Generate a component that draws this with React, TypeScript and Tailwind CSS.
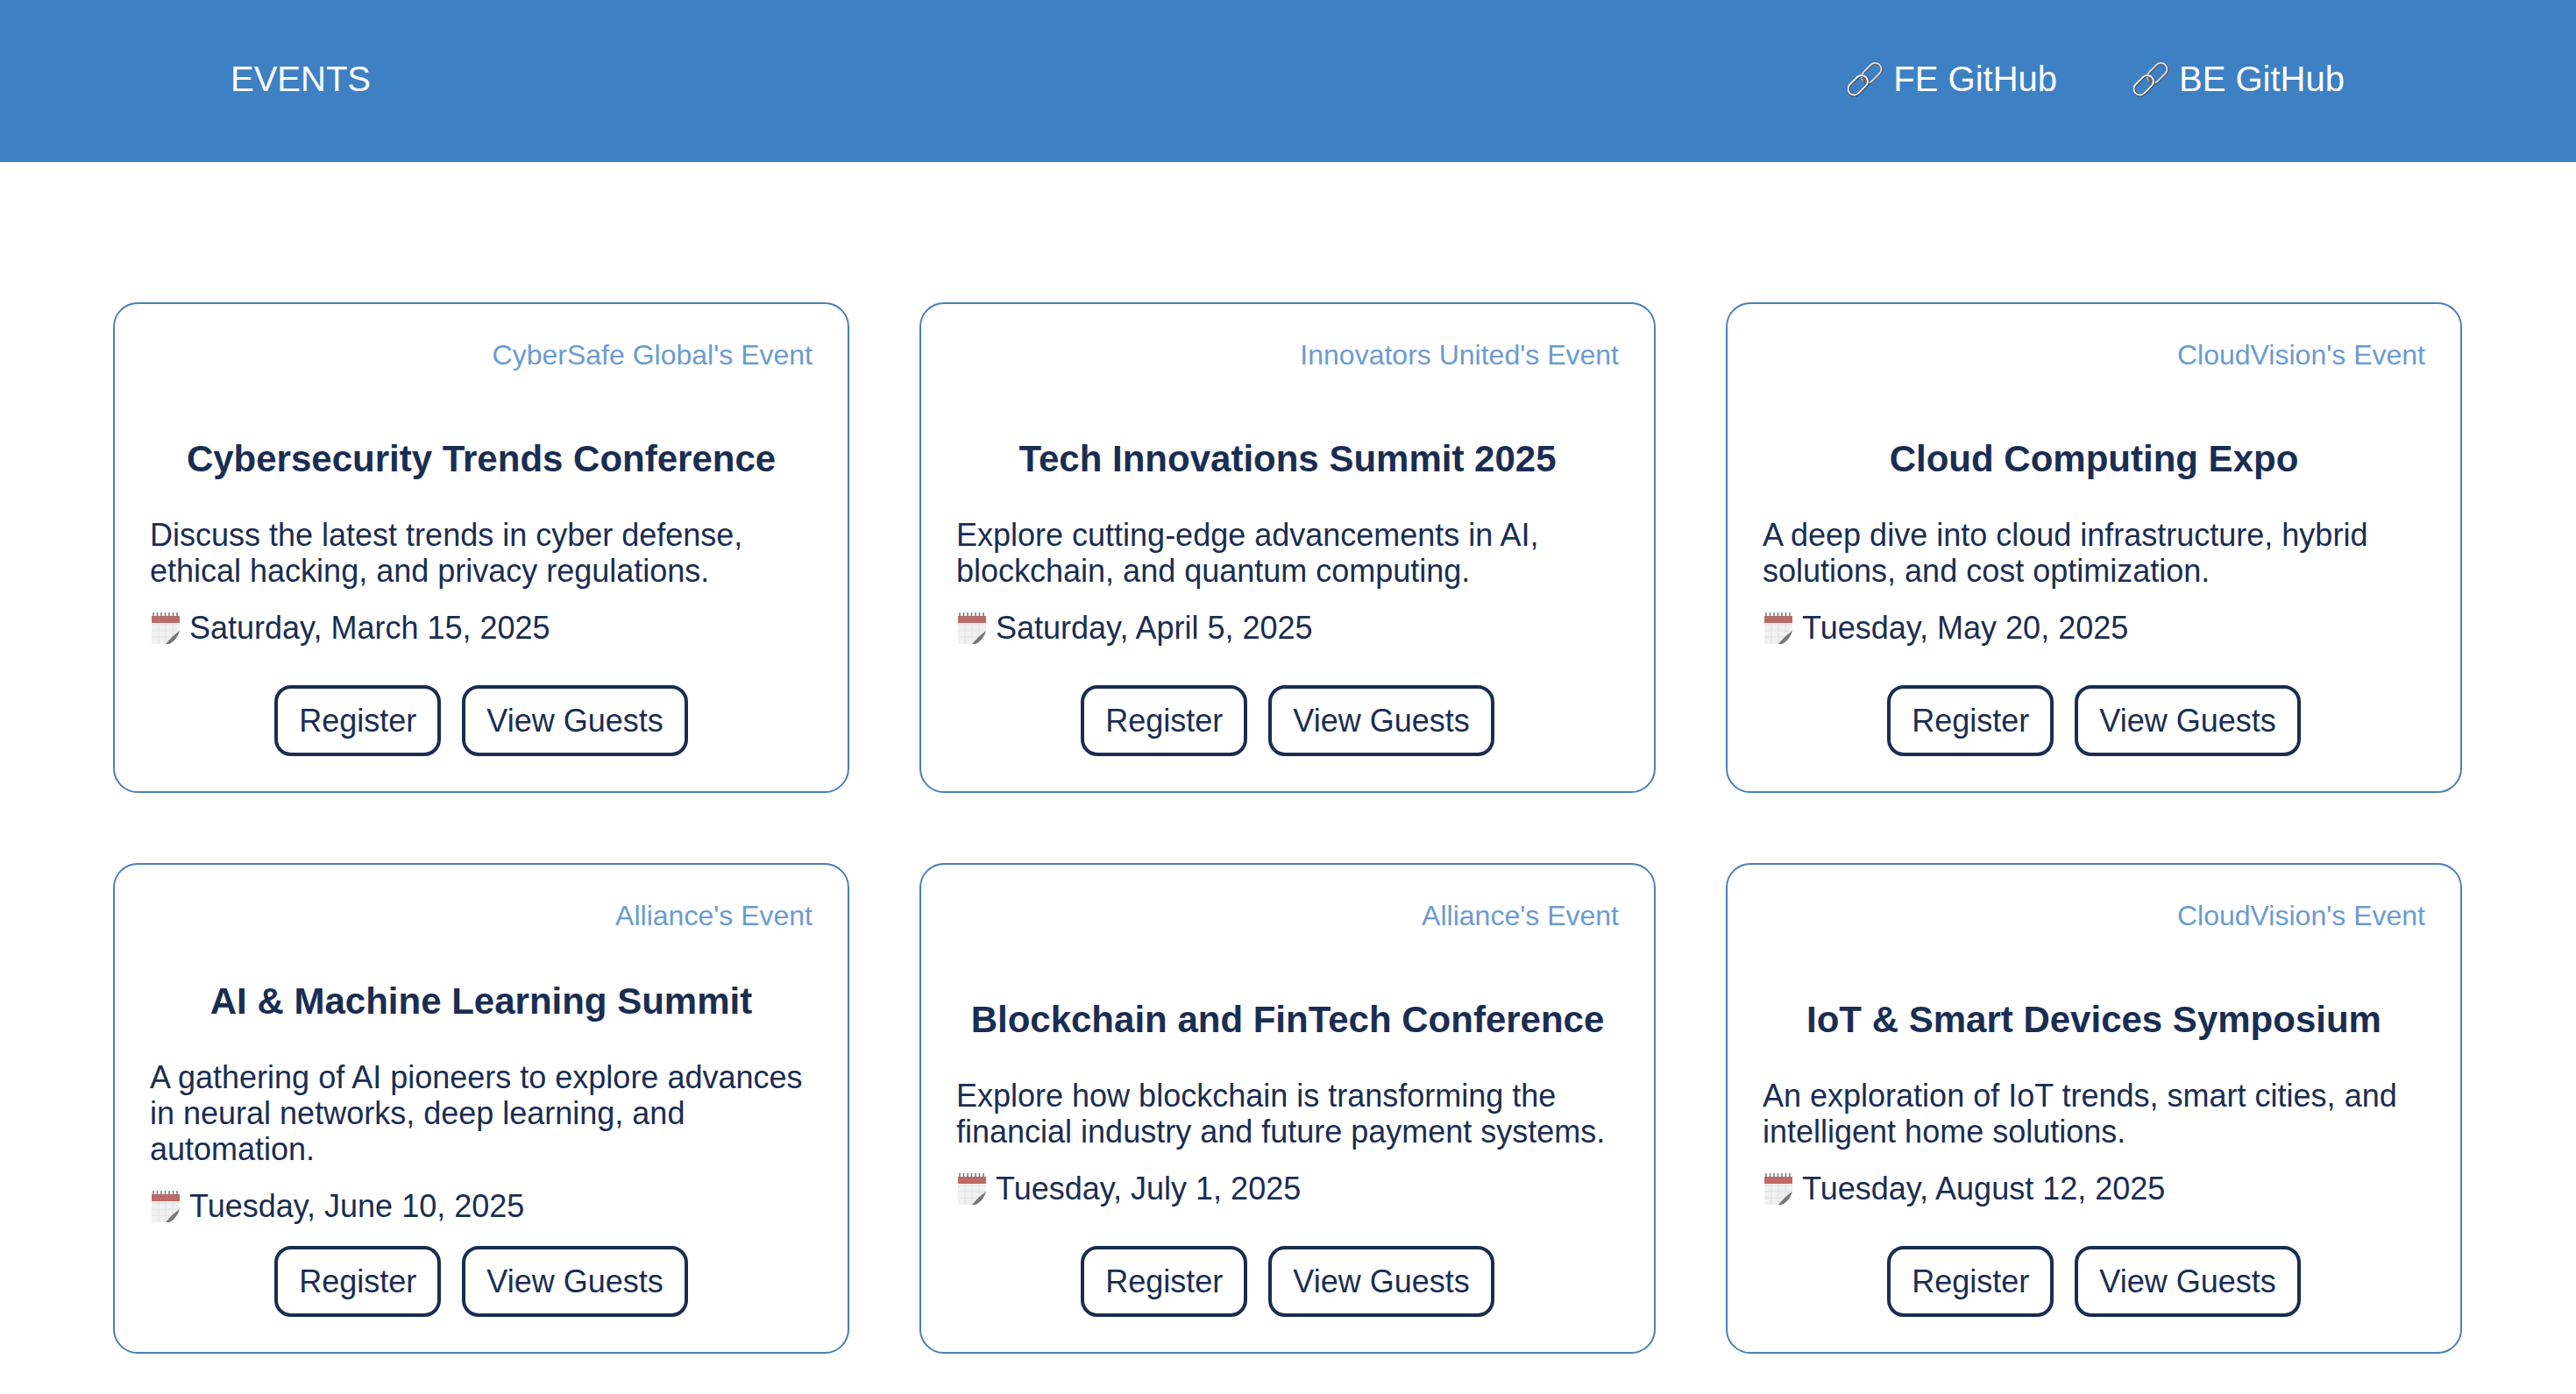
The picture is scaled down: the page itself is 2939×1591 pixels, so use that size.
const events = [
  { org: "CyberSafe Global's Event", title: "Cybersecurity Trends Conference", desc: ["Discuss the latest trends in cyber defense,", "ethical hacking, and privacy regulations."], date: "Saturday, March 15, 2025" },
  { org: "Innovators United's Event", title: "Tech Innovations Summit 2025", desc: ["Explore cutting-edge advancements in AI,", "blockchain, and quantum computing."], date: "Saturday, April 5, 2025" },
  { org: "CloudVision's Event", title: "Cloud Computing Expo", desc: ["A deep dive into cloud infrastructure, hybrid", "solutions, and cost optimization."], date: "Tuesday, May 20, 2025" },
  { org: "Alliance's Event", title: "AI & Machine Learning Summit", desc: ["A gathering of AI pioneers to explore advances", "in neural networks, deep learning, and", "automation."], date: "Tuesday, June 10, 2025" },
  { org: "Alliance's Event", title: "Blockchain and FinTech Conference", desc: ["Explore how blockchain is transforming the", "financial industry and future payment systems."], date: "Tuesday, July 1, 2025" },
  { org: "CloudVision's Event", title: "IoT & Smart Devices Symposium", desc: ["An exploration of IoT trends, smart cities, and", "intelligent home solutions."], date: "Tuesday, August 12, 2025" },
];

function LinkIcon() {
  return (
    <svg width="42" height="42" viewBox="0 0 42 42" fill="none" className="shrink-0">
      <g transform="rotate(-45 27.500 14.500)">
        <rect x="14.500" y="7.500" width="26" height="14" rx="7" stroke="#55585e" strokeWidth="3.200" />
        <rect x="14.500" y="7" width="26" height="14" rx="7" stroke="#dde2e8" strokeWidth="1.800" />
      </g>
      <path d="M16 20C18 18 21 21 22 25L19 27C18 24 17 22 16 20Z" fill="#6a675f" />
      <g transform="rotate(-45 12 28.500)">
        <rect x="-1" y="21.500" width="26" height="14" rx="7" stroke="#3a3d42" strokeWidth="3.200" />
        <rect x="-1" y="21" width="26" height="14" rx="7" stroke="#f4f6f8" strokeWidth="2" />
      </g>
    </svg>
  );
}

function CalendarIcon() {
  return (
    <svg width="32" height="36" viewBox="0 0 32 36" className="shrink-0 ml-[2px]">
      <rect x="0" y="4" width="32" height="32" fill="#f1f1f1" />
      <path d="M0 14H32M0 21H32M0 28H32M8 9V36M16 9V36M24 9V36" stroke="#e0e0e0" strokeWidth="1" />
      <rect x="0" y="4" width="32" height="8" fill="#bd6a68" />
      <path d="M2 0V5M6.500 0V5M11 0V5M15.500 0V5M20 0V5M24.500 0V5M29 0V5" stroke="#77777b" strokeWidth="1.500" />
      <path d="M16 36C22 34 28 29 32 21V36Z" fill="#ffffff" />
      <path d="M16 36C21 30 26 25 32 21C30 28 25 34 20 36Z" fill="#77777a" />
    </svg>
  );
}

function Card({ org, title, desc, date }: { org: string; title: string; desc: string[]; date: string }) {
  return (
    <div className="flex flex-col h-[560px] border-2 border-[#4a80b5] rounded-[28px] bg-white px-[40px] pt-[40px] pb-[40px] text-[#1a2d52]">
      <div className="text-right text-[32px] leading-[36px] text-[#6c9bd0]">{org}</div>
      <div className="flex-1 flex flex-col justify-center pt-[32px]">
        <h2 className="text-center text-[42px] leading-[50px] font-bold mb-[41px]">{title}</h2>
        <p className="text-[36px] leading-[41px]">
          {desc.map((l) => (
            <span key={l} className="block whitespace-nowrap">{l}</span>
          ))}
        </p>
        <div className="flex items-center gap-[11px] text-[36px] leading-[44px] mt-[23px]">
          <CalendarIcon />
          <span>{date}</span>
        </div>
      </div>
      <div className="flex justify-center gap-[24px]">
        <button className="h-[81px] px-[24px] border-[4px] border-[#1a2d52] rounded-[19px] bg-white text-[36px] text-[#1a2d52]">Register</button>
        <button className="h-[81px] px-[24px] border-[4px] border-[#1a2d52] rounded-[19px] bg-white text-[36px] text-[#1a2d52]">View Guests</button>
      </div>
    </div>
  );
}

export default function App() {
  return (
    <div className="min-h-[1591px] bg-white font-['Liberation_Sans',Arial,sans-serif]">
      <header className="h-[185px] bg-[#3e80c4] flex items-center justify-between pl-[263px] pr-[264px] text-white text-[40px] pb-[6px]">
        <div>EVENTS</div>
        <nav className="flex items-center gap-[87px]">
          <a className="flex items-center gap-[10px]"><LinkIcon />FE GitHub</a>
          <a className="flex items-center gap-[10px]"><LinkIcon />BE GitHub</a>
        </nav>
      </header>
      <main className="grid grid-cols-[repeat(3,840px)] gap-x-[80px] gap-y-[80px] pl-[129px] pt-[160px]">
        {events.map((e) => (
          <Card key={e.title} {...e} />
        ))}
      </main>
    </div>
  );
}
